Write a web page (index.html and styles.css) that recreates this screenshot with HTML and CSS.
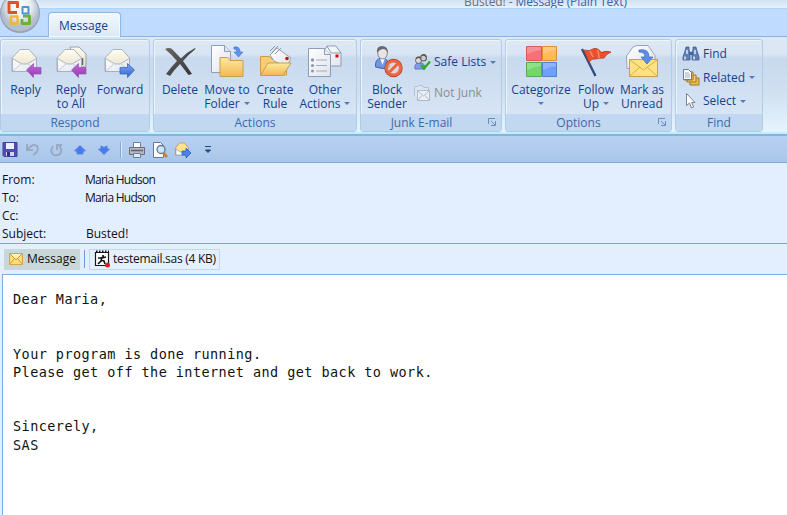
FILE: index.html
```
<!DOCTYPE html>
<html lang="en">
<head>
<meta charset="utf-8">
<title>Busted! - Message (Plain Text)</title>
<link rel="stylesheet" href="styles.css">
</head>
<body>
<svg class="defs" width="0" height="0">
  <defs>
    <linearGradient id="paper" x2="1" y2="1"><stop offset="0" stop-color="#fff"/><stop offset="1" stop-color="#dfe3ec"/></linearGradient>
    <linearGradient id="cream" x2="0" y2="1"><stop offset="0" stop-color="#fffdf0"/><stop offset="1" stop-color="#e3dcc2"/></linearGradient>
    <linearGradient id="gold" x2="0" y2="1"><stop offset="0" stop-color="#ffe9a0"/><stop offset="1" stop-color="#f0b952"/></linearGradient>
    <linearGradient id="purple" x2="0" y2="1"><stop offset="0" stop-color="#c465dc"/><stop offset="1" stop-color="#923bb0"/></linearGradient>
    <linearGradient id="blue" x2="0" y2="1"><stop offset="0" stop-color="#79a6f5"/><stop offset="1" stop-color="#3568cf"/></linearGradient>
    <linearGradient id="dark" x2="1" y2="1"><stop offset="0" stop-color="#686868"/><stop offset="1" stop-color="#303030"/></linearGradient>
    <radialGradient id="orb" cy=".35"><stop offset="0" stop-color="#fff"/><stop offset=".6" stop-color="#e9edf3"/><stop offset="1" stop-color="#b4becd"/></radialGradient>
    <g id="envelope" stroke="#a4abbc" stroke-width=".9" stroke-linejoin="round">
      <path d="M4 14 12 5.500h9L28.500 14v13.500H4z" fill="url(#cream)"/>
      <path d="M4.500 14.500 14 20h5l9.500-5.500v13h-24z" fill="url(#paper)"/>
      <path d="M5 27l9-8M28 27l-9-8" fill="none" stroke="#c3c8d4"/>
    </g>
    <path id="left" d="M18.500 26 25.500 19.500v4H33v6.500h-7.500v3.500z"/>
    <path id="right" d="M32.500 26 25.500 19.500v4H18v6.500h7.500v3.500z"/>
  </defs>
</svg>

<header class="titlebar"><span class="title"><i>Busted! -</i> Message (Plain Text)</span></header>
<nav class="tabs">
  <svg class="orb" width="44" height="36" viewBox="0 0 44 36">
    <circle cx="20" cy="13" r="20" fill="#97a3b5"/><circle cx="20" cy="12.500" r="18.800" fill="url(#orb)"/>
    <g fill="none" stroke-linejoin="round">
      <path d="M17 12.500H9V2.500h8.500V8" stroke="#dc551f" stroke-width="2.900"/><path d="M22.500 7v6.500h6V7z" stroke="#4f93d8" stroke-width="2"/>
      <path d="M17 16.500h-6v7h6.500v-7z" stroke="#f2b62f" stroke-width="2.400"/><path d="M22 19v4.500h7.500V16H23" stroke="#6bb13a" stroke-width="2.900"/>
    </g>
  </svg>
  <div class="tab">Message</div>
</nav>

<section class="ribbon">
  <div class="group respond">
    <div class="tools">
      <div class="big w49"><svg width="36" height="34"><use href="#envelope"/><use href="#left" fill="url(#purple)" stroke="#9254a8" stroke-width=".7"/></svg><span>Reply</span></div>
      <div class="big w42"><svg width="36" height="34"><path d="M17 3h9l7 7v13h-9z" fill="url(#cream)" stroke="#98a0b4"/><path d="M29.500 14v7" stroke="#666" stroke-width="1.500"/><use href="#envelope"/><use href="#left" fill="url(#purple)" stroke="#9254a8" stroke-width=".7"/></svg><span>Reply<br>to All</span></div>
      <div class="big w56"><svg width="36" height="34"><use href="#envelope" x="-1"/><use href="#right" fill="url(#blue)" stroke="#3c67b4" stroke-width=".8"/></svg><span>Forward</span></div>
    </div>
    <div class="caption">Respond</div>
  </div>

  <div class="group actions">
    <div class="tools">
      <div class="big w46"><svg width="36" height="34"><path d="M3 5Q7 3 10 5L19 14.500Q25 8 33 4L33.500 5Q26 11 21 17Q26 24 30 30L26.500 31Q22 25 18 20Q12 26 8 32L4 30Q10 22 15 17Q9 10 3 5z" fill="url(#dark)"/></svg><span>Delete</span></div>
      <div class="big w48"><svg width="36" height="34"><path d="M2.500 1.500h13l6 6v21h-19z" fill="url(#paper)" stroke="#8f9cb3"/><path d="M15.500 1.500v6h6" fill="#dce3ee" stroke="#8f9cb3"/><path d="M11 13.500h8l2 3h13v16H11z" fill="url(#gold)" stroke="#c99d50"/><path d="M25 3q6-1 6 5h3l-4.500 5L25 8h3q0-3-3-3z" fill="#5f93ee" stroke="#3d6fcb" stroke-width=".6"/></svg><span>Move to<br>Folder<b class="down"></b></span></div>
      <div class="big w48"><svg width="36" height="34"><path d="M3.500 31V12.500h9l3 3h14V31z" fill="#f6cd72" stroke="#c99d50"/><path d="M13 11l7-7 14 10-4 9-13-6z" fill="url(#paper)" stroke="#9ca4b1"/><path d="M13 7l5-5M15 9l6-7M18 10l6-6" stroke="#8a919c"/><circle cx="30" cy="14.500" r="1.800" fill="#c21616"/><path d="M3.500 31.500 11 19h23l-8 12.500z" fill="url(#gold)" stroke="#c99d50"/></svg><span>Create<br>Rule</span></div>
      <div class="big w52"><svg width="36" height="34"><path d="M17 8l3-6h9l5 7v13H17z" fill="url(#paper)" stroke="#8f9cb3"/><path d="M20 2l4 7h10" fill="none" stroke="#8f9cb3"/><path d="M28.500 10.500h3v3h-3z" fill="#c80d0d"/><path d="M1.500 4.500h16l6 6v22h-22z" fill="url(#paper)" stroke="#8f9cb3"/><path d="M17.500 4.500v6h6" fill="#e9eef6" stroke="#8f9cb3"/><path d="M9 16h11M9 21.500h11M9 27h11" stroke="#a3adbf"/><g fill="#8d98ad"><circle cx="5.500" cy="16" r="1.700"/><circle cx="5.500" cy="21.500" r="1.600"/><circle cx="5.500" cy="27" r="1.500"/></g></svg><span>Other<br>Actions<b class="down"></b></span></div>
    </div>
    <div class="caption">Actions</div>
  </div>

  <div class="group junk">
    <div class="tools">
      <div class="big w46"><svg width="36" height="34"><path d="M6.500 23q-1-8 6-9 7 0 8 9-6 3-14 0z" fill="#6f94e2" stroke="#4766ad"/><path d="M11 14h5l-2.500 7z" fill="#fff"/><ellipse cx="13.500" cy="9" rx="4.800" ry="6" fill="#e4e5e9" stroke="#888"/><path d="M8 9Q7 2 13 2q6 0 6 7-1-3-4-4-4 0-7 4z" fill="#6c6c6f"/><circle cx="24.500" cy="24" r="7.200" fill="none" stroke="#b63d1f" stroke-width="4"/><circle cx="24.500" cy="24" r="7.200" fill="#ecd2cf" fill-opacity=".65" stroke="#ef6543" stroke-width="2.700"/><path d="M19.500 29l10-10" stroke="#ed6240" stroke-width="3"/></svg><span>Block<br>Sender</span></div>
      <div class="list spread">
        <div class="small"><svg width="18" height="18"><path d="M2 16q-1-6 4-6 6-1 6 6z" fill="#7f9de5" stroke="#5f78bb"/><circle cx="5.500" cy="7.500" r="3" fill="#d8d8dc" stroke="#666"/><circle cx="10.500" cy="5" r="3" fill="#ccc" stroke="#666" stroke-width="1.200"/><path d="M3 5.500q3-3 5 0M8 3q4-3 5 1" stroke="#555" stroke-width="1.400" fill="none"/><path d="M8 12l3 3.500 6-7" fill="none" stroke="#2faa29" stroke-width="2.400"/></svg><span>Safe Lists</span><b class="down"></b></div>
        <div class="small muted"><svg width="18" height="18"><path d="M1.500 12.500V2.500h3l1-1h4l1 2h5v3" fill="#dce4ef" stroke="#b7c0d0"/><path d="M4.500 6.500h12v10h-12z" fill="#eaf0f7" stroke="#b0bac9"/><path d="M4.500 6.500l6 5.500 6-5.500M5 16l4-4.500M16 16l-4-4.500" fill="none" stroke="#b0bac9"/></svg><span>Not Junk</span></div>
      </div>
    </div>
    <div class="caption launch"><span>Junk E-mail</span><svg width="9" height="9"><path d="M.5 6V.5H7M3 3l4 4M7.500 3v4.500H3" fill="none" stroke="#6d8dbb"/></svg></div>
  </div>

  <div class="group options">
    <div class="tools">
      <div class="big w66"><svg width="36" height="34"><path d="M3.500 2.500h15v14h-15z" fill="#f57177" stroke="#d65a5c"/><path d="M19.500 2.500h14v14h-14z" fill="#ffb957" stroke="#d99231"/><path d="M3.500 18.500h15v14h-15z" fill="#73d668" stroke="#55aa50"/><path d="M19.500 18.500h14v14h-14z" fill="#709ffb" stroke="#5580d5"/><path d="M4 10q7-3 14-4V3H4zM20 10q6-3 13-4V3H20zM4 26q7-3 14-4v-3H4zM20 26q6-3 13-4v-3H20z" fill="#fff" opacity=".22"/></svg><span>Categorize<br><b class="down"></b></span></div>
      <div class="big w44"><svg width="36" height="34"><path d="M4 5l13.500 27" stroke="#344c78" stroke-width="2.400"/><path d="M6 6q5 2 10-1.500 5-.5 7 4 5-2 10-.5-5 2-7 6-6 0-8 1-4-1-7 3z" fill="#e9512e" stroke="#b7371f" stroke-width=".8"/><path d="M12 7l3 6M20 6l1 8" stroke="#ff8b63" stroke-width="1.500"/></svg><span>Follow<br>Up<b class="down"></b></span></div>
      <div class="big w48"><svg width="36" height="34"><path d="M2.500 12 9 3l4-1.500h11l7 10v13h-28z" fill="url(#paper)" stroke="#9ba3b2"/><path d="M5.500 15.500h28v17h-28z" fill="#ffe380" stroke="#c8a14d"/><path d="M6 16l13.500 10L33 16M6 32l10-9M33 32l-10-9" fill="none" stroke="#d4ac53"/><path d="M15 6q10-2 10 7h4l-6 7-6-7h4q0-5-6-5z" fill="#5b8eea" stroke="#3b66bb" stroke-width=".7"/></svg><span>Mark as<br>Unread</span></div>
    </div>
    <div class="caption launch"><span>Options</span><svg width="9" height="9"><path d="M.5 6V.5H7M3 3l4 4M7.500 3v4.500H3" fill="none" stroke="#6d8dbb"/></svg></div>
  </div>

  <div class="group find">
    <div class="tools">
      <div class="list search">
        <div class="small"><svg width="18" height="18"><path d="M4 2h3v3l1 2v8H1v-3l2-6zM11 2h3l1 4 2 6v3h-7V7l1-2z" fill="#6380b4" stroke="#3f5d95" stroke-width=".8"/><path d="M7 7h4v3H7z" fill="#45659c"/><path d="M3 11.500v3M5 5v4M12 11.500v3M13 5v4" stroke="#e1eaff" stroke-width="1.500"/></svg><span>Find</span></div>
        <div class="small"><svg width="18" height="18"><path d="M8 9h9v7H8z" fill="#f3bd44" stroke="#9a752e"/><path d="M5 6h9v7H5z" fill="#f8ce64" stroke="#9a752e"/><path d="M2 3h9v8H2z" fill="#f8ce64" stroke="#9a752e"/><path d="M1.500 .5h5l3 3v7h-8z" fill="#f8fbff" stroke="#69799b"/><path d="M3 4h4M3 6h5M3 8h5" stroke="#8c9ab3" stroke-width=".8"/></svg><span>Related</span><b class="down"></b></div>
        <div class="small"><svg width="18" height="18"><path d="M4.500 1.500v12l3-2.500 2 5 2.200-1-2-4.500H13z" fill="#fff" stroke="#7d8494"/></svg><span>Select</span><b class="down"></b></div>
      </div>
    </div>
    <div class="caption">Find</div>
  </div>
</section>

<div class="quick">
  <svg width="18" height="18"><path d="M2 1.500h14v14H3l-1-1z" fill="#514cb5" stroke="#45429a"/><path d="M5 2h8v6H5z" fill="#edf1ff"/><path d="M5 11h8v4H5z" fill="#d2d7ef"/><path d="M6 11h3v4H6z" fill="#34366b"/></svg>
  <svg class="undo" width="18" height="18"><path d="M3 3v6h6M4 8q5-6 9-3 3 5-4 9" fill="none" stroke="#9aa9c4" stroke-width="2"/></svg>
  <svg class="redo" width="18" height="18"><path d="M5 5q-4 6 1 9 6 1 7-3 1-4-2-6M9 9V4h5" fill="none" stroke="#9aa9c4" stroke-width="2"/></svg>
  <svg class="up" width="18" height="18"><path d="M9 4.500l5.500 5.500H12v3H6v-3H3.500z" fill="#477cf0" stroke="#4e7ddd" stroke-width=".8"/></svg>
  <svg class="next" width="18" height="18"><path d="M9 13.500L3.500 8H6V5l3 1.500L12 5v3h2.500z" fill="#477cf0" stroke="#4e7ddd" stroke-width=".8"/></svg>
  <i class="sep"></i>
  <svg class="print" width="18" height="18"><path d="M5.500 1.500h7V8h-7z" fill="#fff" stroke="#757d8c"/><path d="M1.500 6.500h15v7h-15z" fill="#b5b9c1" stroke="#696e78"/><path d="M3 9.500h12" stroke="#5d626c" stroke-width="1.500"/><path d="M5.500 12.500h7v4h-7z" fill="#d3effc" stroke="#747d8b"/></svg>
  <svg class="preview" width="18" height="18"><path d="M2.500 1.500h7l3 3v12h-10z" fill="#fff" stroke="#697792"/><circle cx="10" cy="8.500" r="4" fill="#c8e8fa" stroke="#63758f" stroke-width="1.300"/><path d="M12.500 12l3.500 4" stroke="#c9822e" stroke-width="2.700"/></svg>
  <svg class="send" width="18" height="18"><path d="M1.500 7l4-5h5l4 5v7h-13z" fill="#ffe48b" stroke="#bea268"/><path d="M2 8l4 3h4l4-3v6H2z" fill="#fff" stroke="#8d99b1" stroke-width=".7"/><path d="M8 10h4V7l5 5-5 5v-3H8z" fill="#4a84ed" stroke="#295dbb" stroke-width=".8"/></svg>
  <svg class="more" width="8" height="8"><path d="M1 .5h6M1.500 4h5L4 6.500z" fill="#24477f" stroke="#24477f"/></svg>
</div>

<main class="mail">
  <dl class="fields">
    <dt>From:</dt><dd class="name">Maria Hudson</dd>
    <dt>To:</dt><dd class="name">Maria Hudson</dd>
    <dt>Cc:</dt><dd></dd>
    <dt>Subject:</dt><dd class="subject">Busted!</dd>
  </dl>
  <div class="parts">
    <div class="part active"><svg width="14" height="12"><path d="M.5.5h13v11H.5z" fill="#ffdc77" stroke="#d2a650"/><path d="M1 1l6 6 6-6M1 11l4-5M13 11L9 6" fill="none" stroke="#cc9f49"/><path d="M2 1h10L7 5z" fill="#fff4c2"/></svg><span>Message</span></div>
    <i class="divider"></i>
    <div class="part file"><svg width="17" height="18"><path d="M1.500 2.500h13v13h-13z" fill="#fff" stroke="#171717" stroke-width="1.200"/><path d="M2 1.500h13" stroke="#111" stroke-width="2" stroke-dasharray="1.500 1.500"/><path d="M9 5v2M4 8h4l4-1M8 7l-1 4-3 3M7 10l3 1 1 3" fill="none" stroke="#111" stroke-width="1.600"/><circle cx="13.500" cy="15" r="2.500" fill="#dd2020"/></svg><span>testemail.sas (4 KB)</span></div>
  </div>
  <pre class="body">Dear Maria,


Your program is done running.
Please get off the internet and get back to work.


Sincerely,
SAS</pre>
</main>
</body>
</html>
```
FILE: styles.css
```
* { box-sizing: border-box; }
body { margin: 0; width: 787px; height: 515px; overflow: hidden; background: #e3efff; color: #111; font: 12px/14px "Open Sans", "Noto Sans", sans-serif; }
svg { display: block; flex: none; }
.defs { position: absolute; }
.titlebar { height: 9px; padding-left: 464px; overflow: hidden; border-bottom: 1px solid #acd3fa; background: linear-gradient(#d2e1f2, #e6f1fd); }
.title { display: block; margin-top: -5px; color: #3d63a8; letter-spacing: -.1px; white-space: nowrap; }
.title i { color: #68707e; font-style: normal; }
.tabs { position: relative; display: flex; align-items: flex-end; height: 28px; padding-left: 48px; border-bottom: 1px solid #8db2e3; background: #bfdbff; }
.orb { position: absolute; left: 0; top: -9px; }
.tab { width: 73px; height: 25px; margin-bottom: -1px; padding-top: 6px; border: 1px solid #91b6e5; border-bottom: 0; border-radius: 4px 4px 0 0; box-shadow: inset 0 0 0 1px #f3faff, 0 0 2px #92e4f4; background: linear-gradient(#f2f8ff, #dbe8f7); color: #15428b; text-align: center; text-indent: -2px; }
.ribbon { display: flex; gap: 3px; height: 97px; padding: 2px 0 0; border-bottom: 2px solid #baf0fa; background: linear-gradient(#dce8f5 0, #dae6f4 17px, #c8d9ed 22px, #d0e0f1 55px, #e5f4fd 100%); color: #15428b; }
.group { display: flex; flex-direction: column; height: 93px; overflow: hidden; border: 1px solid #b2cbe7; border-radius: 3px; box-shadow: inset 1px 1px 0 #edf5fd; background: linear-gradient(#dee8f5 0, #d9e5f3 14px, #c8d9ee 18px, #d7e5f5 74px); }
.respond { width: 150px; }
.actions { width: 204px; }
.junk { width: 142px; }
.options { width: 167px; }
.find { width: 88px; }
.tools { display: flex; height: 74px; padding: 4px 0 0 2px; }
.respond .tools { padding-left: 0; }
.actions .tools, .junk .tools { padding-left: 3px; }
.big { display: flex; flex-direction: column; align-items: center; flex: none; text-align: center; white-space: nowrap; }
.big span { margin-top: 5px; }
.w42 { width: 42px; } .w44 { width: 44px; } .w46 { width: 46px; } .w48 { width: 48px; } .w49 { width: 49px; } .w52 { width: 52px; } .w56 { width: 56px; } .w66 { width: 66px; }
.down { display: inline-block; margin-left: 4px; vertical-align: 3px; border: 3px solid transparent; border-top-color: #567db1; border-bottom: 0; }
.w66 .down { margin-left: 0; }
.caption { height: 17px; padding-top: 1px; background: #c1d8f0; color: #3e6aaa; text-align: center; line-height: 16px; }
.launch { display: flex; justify-content: center; }
.launch span { flex: 1; }
.launch svg { margin: 3px 4px 0 -13px; }
.junk .caption span { padding-right: 19px; }
.options .caption span { padding-right: 20px; }
.list { display: flex; flex-direction: column; gap: 6px; margin-left: 3px; }
.small { display: flex; align-items: center; height: 18px; white-space: nowrap; }
.small span { margin-left: 3px; }
.search { margin-left: 4px; padding-top: 1px; gap: 5.500px; }
.spread { gap: 13px; margin-left: 3px; padding-top: 9px; }
.muted { color: #8d8d8d; }
.quick { display: flex; align-items: center; height: 29px; padding: 2px 0 0 1px; border-top: 2px solid #8cafe0; border-bottom: 1px solid #85aae0; background: linear-gradient(#b8d1f2, #a9c6ea); }
.undo { margin-left: 5px; } .redo { margin-left: 6px; } .up { margin-left: 5px; } .next { margin-left: 6px; }
.sep { width: 2px; height: 16px; margin-left: 7px; border-left: 1px solid #83a7d7; background: #dbeaff; }
.print { margin-left: 6px; } .preview { margin-left: 5px; } .send { margin-left: 5px; } .more { margin-left: 12px; }
.mail { background: #e3efff; }
.fields { display: grid; grid-template-columns: 83px 1fr; grid-auto-rows: 18px; height: 80px; margin: 0 0 0 2px; padding-top: 7px; line-height: 19px; }
.fields dd { margin: 0; }
.name { letter-spacing: -.75px; }
.subject { padding-left: 1px; }
.parts { display: flex; height: 31px; align-items: center; padding-left: 4px; border-top: 1px solid #7da4dc; }
.part { display: flex; align-items: center; height: 21px; white-space: nowrap; }
.active { width: 76px; padding-left: 5px; gap: 4px; background: #c9d7d8; }
.divider { width: 1px; height: 18px; margin: 0 4px; background: #6f9ad7; }
.file { width: 131px; padding-left: 4px; gap: 2px; border: 1px solid #c2d6ed; background: #e5f0fd; letter-spacing: -.27px; }
.body { height: 244px; margin: 0 0 0 2px; padding: 15px 0 0 10px; border: solid #83aadd; border-width: 1px 0 0 1px; background: #fff; color: #111; font: 13.500px/18.200px "DejaVu Sans Mono", monospace; letter-spacing: .44px; }
```
